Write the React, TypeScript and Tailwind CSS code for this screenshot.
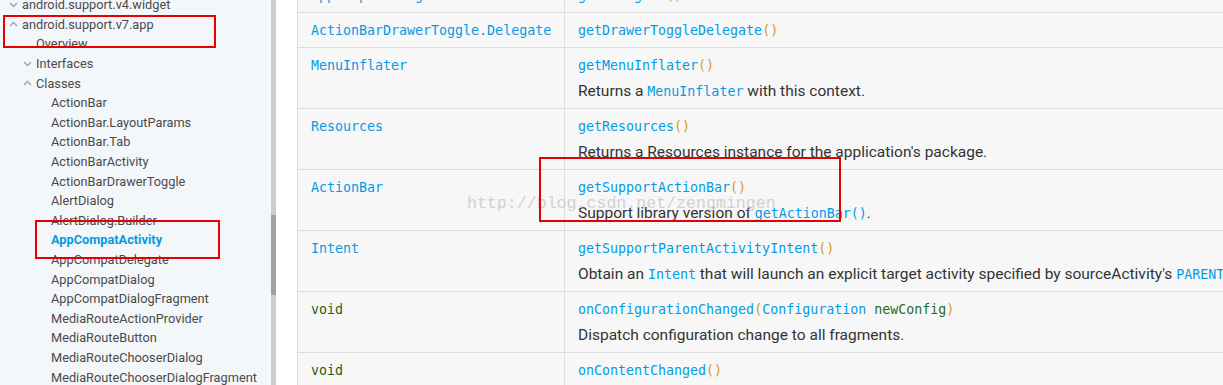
import React from "react";

type NavItem = {
  label: string;
  level: 0 | 1 | 2;
  chevron?: "up" | "down";
  active?: boolean;
};

const navItems: NavItem[] = [
  { label: "android.support.v4.widget", level: 0, chevron: "down" },
  { label: "android.support.v7.app", level: 0, chevron: "up" },
  { label: "Overview", level: 1 },
  { label: "Interfaces", level: 1, chevron: "down" },
  { label: "Classes", level: 1, chevron: "up" },
  { label: "ActionBar", level: 2 },
  { label: "ActionBar.LayoutParams", level: 2 },
  { label: "ActionBar.Tab", level: 2 },
  { label: "ActionBarActivity", level: 2 },
  { label: "ActionBarDrawerToggle", level: 2 },
  { label: "AlertDialog", level: 2 },
  { label: "AlertDialog.Builder", level: 2 },
  { label: "AppCompatActivity", level: 2, active: true },
  { label: "AppCompatDelegate", level: 2 },
  { label: "AppCompatDialog", level: 2 },
  { label: "AppCompatDialogFragment", level: 2 },
  { label: "MediaRouteActionProvider", level: 2 },
  { label: "MediaRouteButton", level: 2 },
  { label: "MediaRouteChooserDialog", level: 2 },
  { label: "MediaRouteChooserDialogFragment", level: 2 },
];

function Chevron({ dir }: { dir: "up" | "down" }) {
  return (
    <svg width="9" height="6" viewBox="0 0 9 6" className="shrink-0">
      <polyline
        points={dir === "down" ? "1,1 4.5,4.5 8,1" : "1,5 4.5,1.5 8,5"}
        fill="none"
        stroke="#a0a4a8"
        strokeWidth="1.4"
      />
    </svg>
  );
}

function NavRow({ item }: { item: NavItem }) {
  const pad =
    item.level === 0
      ? item.chevron
        ? "pl-[9px]"
        : "pl-[22px]"
      : item.level === 1
        ? item.chevron
          ? "pl-[23px]"
          : "pl-[36px]"
        : "pl-[51px]";
  return (
    <div className={`flex items-center gap-[4px] h-[19.6px] ${pad}`}>
      {item.chevron && <Chevron dir={item.chevron} />}
      <span className={item.active ? "text-[#039be5] font-bold" : "text-[#4a4a4a]"}>
        {item.label}
      </span>
    </div>
  );
}

const mono = "font-['DejaVu_Sans_Mono',monospace] text-[13.3px]";

function Code({ children, color = "text-[#039be5]" }: { children: React.ReactNode; color?: string }) {
  return <span className={`${mono} ${color}`}>{children}</span>;
}

const Paren = ({ children }: { children: React.ReactNode }) => (
  <span className="text-[#d29a1e]">{children}</span>
);

type Row = {
  type: React.ReactNode;
  method: React.ReactNode;
  desc?: React.ReactNode;
};

const rows: Row[] = [
  {
    type: <Code>AppCompatDelegate</Code>,
    method: (
      <Code>
        getDelegate<Paren>()</Paren>
      </Code>
    ),
  },
  {
    type: <Code>ActionBarDrawerToggle.Delegate</Code>,
    method: (
      <Code>
        getDrawerToggleDelegate<Paren>()</Paren>
      </Code>
    ),
  },
  {
    type: <Code>MenuInflater</Code>,
    method: (
      <Code>
        getMenuInflater<Paren>()</Paren>
      </Code>
    ),
    desc: (
      <>
        Returns a <Code>MenuInflater</Code> with this context.
      </>
    ),
  },
  {
    type: <Code>Resources</Code>,
    method: (
      <Code>
        getResources<Paren>()</Paren>
      </Code>
    ),
    desc: <>Returns a Resources instance for the application's package.</>,
  },
  {
    type: <Code>ActionBar</Code>,
    method: (
      <Code>
        getSupportActionBar<Paren>()</Paren>
      </Code>
    ),
    desc: (
      <>
        Support library version of <Code>getActionBar()</Code>.
      </>
    ),
  },
  {
    type: <Code>Intent</Code>,
    method: (
      <Code>
        getSupportParentActivityIntent<Paren>()</Paren>
      </Code>
    ),
    desc: (
      <>
        Obtain an <Code>Intent</Code> that will launch an explicit target activity
        specified by sourceActivity's <Code>PARENT_ACTIVITY</Code> &lt;meta-data&gt;
        element in the application's manifest.
      </>
    ),
  },
  {
    type: <Code color="text-[#2f5a16]">void</Code>,
    method: (
      <Code>
        onConfigurationChanged<Paren>(</Paren>Configuration{" "}
        <span className="text-[#1f6e1f]">newConfig</span>
        <Paren>)</Paren>
      </Code>
    ),
    desc: <>Dispatch configuration change to all fragments.</>,
  },
  {
    type: <Code color="text-[#2f5a16]">void</Code>,
    method: (
      <Code>
        onContentChanged<Paren>()</Paren>
      </Code>
    ),
    desc: <>This hook is called whenever the content view of the screen changes.</>,
  },
];

export default function App() {
  return (
    <div className="relative flex w-[1223px] h-[385px] overflow-hidden bg-white font-['Roboto',sans-serif]">
      {/* sidebar */}
      <div className="w-[271px] shrink-0 bg-[#f4f7fa] text-[12.75px] whitespace-nowrap">
        <div className="-mt-[5px]">
          {navItems.map((item) => (
            <NavRow key={item.label} item={item} />
          ))}
        </div>
      </div>
      {/* scrollbar */}
      <div className="w-[5px] shrink-0 bg-[#c8cdd1] flex flex-col">
        <div className="h-[215px]" />
        <div className="h-[80px] bg-[#9da2a6]" />
      </div>
      <div className="w-[21px] shrink-0" />
      {/* table */}
      <div className="flex-1 min-w-0 bg-[#f7f7f7] border-l border-[#dddddd]">
        <div className="-mt-[22px]">
          {rows.map((row, i) => (
            <div key={i} className="flex border-b border-[#dddddd] whitespace-nowrap">
              <div className="w-[267px] shrink-0 border-r border-[#dddddd] pl-[13px] pt-[8px] pb-[6px]">
                <div className={`h-[20px] leading-[20px] ${mono}`}>{row.type}</div>
              </div>
              <div className="flex-1 pl-[13px] pt-[8px] pb-[6px]">
                <div className={`h-[20px] leading-[20px] ${mono}`}>{row.method}</div>
                {row.desc && (
                  <div className="mt-[5px] mb-[1px] h-[20px] leading-[20px] text-[15.5px] text-[#333333]">
                    {row.desc}
                  </div>
                )}
              </div>
            </div>
          ))}
        </div>
      </div>

      {/* watermark */}
      <div className="absolute left-[467px] top-[192px] font-['Liberation_Mono',monospace] text-[16.6px] text-[#c9c9c9] opacity-80 pointer-events-none">
        http://blog.csdn.net/zengmingen
      </div>

      {/* red annotation boxes */}
      <div className="absolute left-[3px] top-[15px] w-[213px] h-[33px] border-2 border-[#e60000] pointer-events-none" />
      <div className="absolute left-[35px] top-[220px] w-[185px] h-[39px] border-2 border-[#e60000] pointer-events-none" />
      <div className="absolute left-[539px] top-[157px] w-[302px] h-[65px] border-2 border-[#e60000] pointer-events-none" />
    </div>
  );
}
